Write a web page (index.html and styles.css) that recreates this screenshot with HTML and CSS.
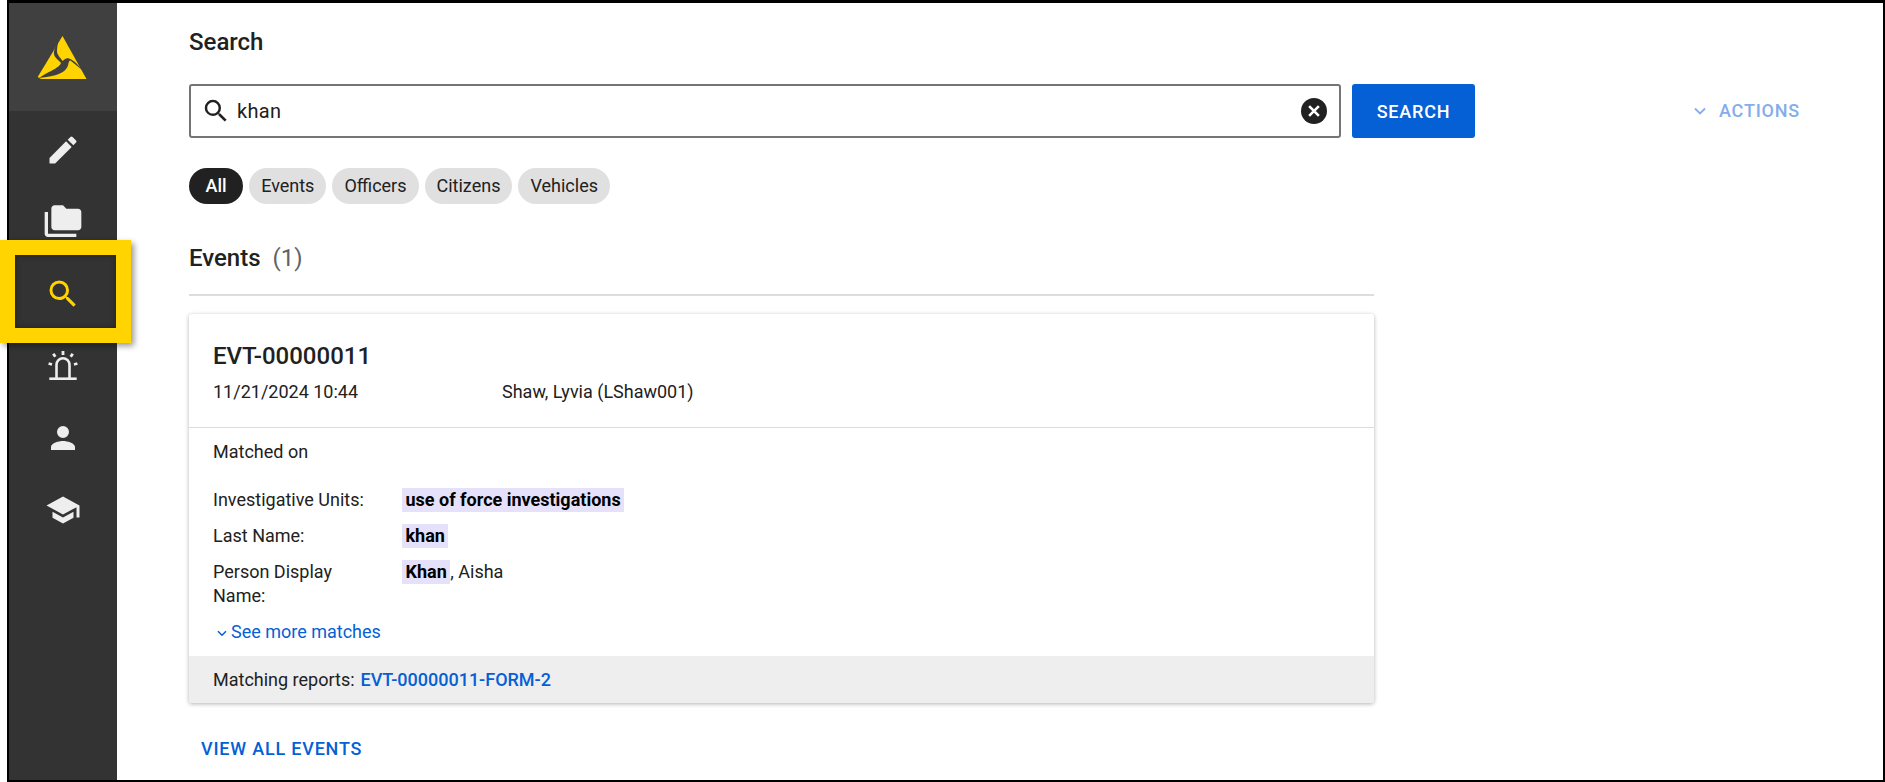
FILE: index.html
```html
<!DOCTYPE html>
<html lang="en">
<head>
<meta charset="utf-8">
<title>Search</title>
<link rel="stylesheet" href="styles.css">
</head>
<body>
<div class="frame">
  <aside class="rail">
    <div class="brand">
      <svg class="logo" viewBox="0 0 60 54" aria-hidden="true">
        <path fill="#ffd400" d="M29.500 5 L53.500 48 L8 48 L4.700 46 Z"/>
        <path fill="#404040" d="M25.700 9 C23 15 20.500 19 21 23 C21.500 27 26 29 28 32 C27 35 22 38 16 41 C12 43 9 45 6 47 C14 46 22 45 28 42 C33 39.500 35 36 35.500 32 C36 30 37 29 38 30 C42 33 47 37 51 41 C46 35 41 29 36 27.500 C33 26.500 31 29 29.500 30 C27 26 24 24 24 20 C24 16 25 12 25.700 9 Z"/>
      </svg>
    </div>
    <nav class="nav">
      <a class="nav-item">
        <svg class="nav-icon" viewBox="0 0 24 24"><path d="M3 17.250V21h3.750L17.810 9.940l-3.750-3.750L3 17.250zM20.710 7.040a1 1 0 0 0 0-1.410l-2.340-2.340a1 1 0 0 0-1.410 0l-1.830 1.830 3.750 3.750 1.830-1.830z"/></svg>
      </a>
      <a class="nav-item">
        <svg class="nav-icon nav-icon-lg" viewBox="0 0 24 24"><path d="M3 6H1v13c0 1.100.9 2 2 2h17v-2H3V6z"/><path d="M21 4h-7l-2-2H7c-1.100 0-1.990.9-1.990 2L5 15c0 1.100.9 2 2 2h14c1.100 0 2-.9 2-2V6c0-1.100-.9-2-2-2z"/></svg>
      </a>
      <a class="nav-item">
        <svg class="nav-icon nav-icon-active" viewBox="0 0 24 24"><path d="M15.500 14h-.79l-.28-.27A6.470 6.470 0 0 0 16 9.500 6.500 6.500 0 1 0 9.500 16c1.610 0 3.090-.59 4.230-1.570l.27.28v.79l5 4.990L20.490 19l-4.990-5zm-6 0C7.010 14 5 11.990 5 9.500S7.010 5 9.500 5 14 7.010 14 9.500 11.990 14 9.500 14z"/></svg>
      </a>
      <a class="nav-item">
        <svg class="nav-icon nav-icon-siren" viewBox="0 0 32 30"><g fill="none" stroke="#eee" stroke-width="2.600"><path d="M2.300 27.700h27.400"/><path d="M9.500 27V13.800a6.500 6.500 0 0 1 13 0V27"/></g><g fill="none" stroke="#eee" stroke-width="2.800"><path d="M16 0v4"/><path d="M6.300 2.800l2 3"/><path d="M25.700 2.800l-2 3"/><path d="M1.600 12.500l3.400 1"/><path d="M30.400 12.500l-3.400 1"/></g></svg>
      </a>
      <a class="nav-item">
        <svg class="nav-icon" viewBox="0 0 24 24"><path d="M12 12a4 4 0 1 0 0-8 4 4 0 0 0 0 8zm0 2c-2.670 0-8 1.340-8 4v2h16v-2c0-2.660-5.330-4-8-4z"/></svg>
      </a>
      <a class="nav-item">
        <svg class="nav-icon" viewBox="0 0 24 24"><path d="M5 13.180v4L12 21l7-3.820v-4L12 17l-7-3.820zM12 3 1 9l11 6 9-4.910V17h2V9L12 3z"/></svg>
      </a>
    </nav>
  </aside>

  <main class="content">
    <h1 class="page-title">Search</h1>

    <div class="search-row">
      <div class="search-box">
        <svg class="search-icon" viewBox="0 0 24 24"><path d="M15.500 14h-.79l-.28-.27A6.470 6.470 0 0 0 16 9.500 6.500 6.500 0 1 0 9.500 16c1.610 0 3.090-.59 4.230-1.570l.27.28v.79l5 4.990L20.490 19l-4.990-5zm-6 0C7.010 14 5 11.990 5 9.500S7.010 5 9.500 5 14 7.010 14 9.500 11.990 14 9.500 14z"/></svg>
        <span class="search-value">khan</span>
        <svg class="clear-icon" viewBox="0 0 24 24"><circle cx="12" cy="12" r="12" fill="#212121"/><path d="M7.500 7.500l9 9M16.500 7.500l-9 9" stroke="#fff" stroke-width="2.400" fill="none"/></svg>
      </div>
      <button class="search-btn">SEARCH</button>
      <div class="actions">
        <svg class="actions-chevron" viewBox="0 0 12 8"><path d="M1 1.500l5 5 5-5" fill="none" stroke="currentColor" stroke-width="1.800"/></svg>
        <span>ACTIONS</span>
      </div>
    </div>

    <div class="chips">
      <span class="chip chip-on">All</span>
      <span class="chip">Events</span>
      <span class="chip">Officers</span>
      <span class="chip">Citizens</span>
      <span class="chip">Vehicles</span>
    </div>

    <section class="results">
      <h2 class="section-title">Events <span class="count">(1)</span></h2>
      <article class="card">
        <header class="card-head">
          <h3 class="card-id">EVT-00000011</h3>
          <div class="card-meta">
            <span class="meta-date">11/21/2024 10:44</span>
            <span>Shaw, Lyvia (LShaw001)</span>
          </div>
        </header>
        <div class="card-body">
          <div class="matched">Matched on</div>
          <dl class="matches">
            <dt>Investigative Units:</dt>
            <dd><mark>use of force investigations</mark></dd>
            <dt>Last Name:</dt>
            <dd><mark>khan</mark></dd>
            <dt>Person Display Name:</dt>
            <dd><mark>Khan</mark>, Aisha</dd>
          </dl>
          <a class="more">
            <svg class="more-chevron" viewBox="0 0 10 7"><path d="M1 1.200l4 4 4-4" fill="none" stroke="currentColor" stroke-width="1.500"/></svg>See more matches
          </a>
        </div>
        <footer class="card-foot">
          <span>Matching reports:</span>
          <a class="report-link">EVT-00000011-FORM-2</a>
        </footer>
      </article>
      <a class="view-all">VIEW ALL EVENTS</a>
    </section>
  </main>
</div>
<div class="spotlight" aria-hidden="true"></div>
</body>
</html>
```
FILE: styles.css
```css
* {
  box-sizing: border-box;
}

html,
body {
  margin: 0;
  height: 100%;
  overflow: hidden;
  background: #fff;
}

body {
  padding-left: 7px;
  font-family: Roboto, "Liberation Sans", sans-serif;
  font-size: 18px;
  line-height: 24px;
  color: #212121;
}

.frame {
  display: flex;
  height: 782px;
  border: 2px solid #000;
  border-top-width: 3px;
}

.rail {
  flex: 0 0 108px;
  background: #333;
}

.brand {
  display: flex;
  height: 108px;
  align-items: center;
  justify-content: center;
  background: #404040;
}

.logo {
  width: 60px;
  height: 54px;
  margin-top: 2px;
}

.nav {
  display: flex;
  flex-direction: column;
  padding-top: 3px;
}

.nav-item {
  display: flex;
  height: 72px;
  align-items: center;
  justify-content: center;
}

.nav-icon {
  width: 36px;
  height: 36px;
  fill: #eee;
}

.nav-icon-lg {
  width: 40px;
  height: 40px;
}

.nav-icon-active {
  fill: #ffd400;
}

.nav-icon-siren {
  width: 32px;
  height: 30px;
}

.content {
  flex: 1;
  padding: 0 0 0 72px;
}

.page-title {
  margin: 0;
  padding-top: 25px;
  font-size: 24px;
  font-weight: 500;
  line-height: 28px;
}

.search-row {
  display: flex;
  align-items: center;
  height: 54px;
  margin-top: 28px;
}

.search-box {
  display: flex;
  align-items: center;
  width: 1152px;
  height: 54px;
  padding: 0 12px 0 10px;
  border: 2px solid #757575;
  border-radius: 3px;
}

.search-icon {
  flex: none;
  width: 30px;
  height: 30px;
  fill: #212121;
}

.search-value {
  flex: 1;
  margin-left: 6px;
  font-size: 20px;
  letter-spacing: 0.3px;
}

.clear-icon {
  flex: none;
  width: 26px;
  height: 26px;
}

.search-btn {
  width: 123px;
  height: 54px;
  margin-left: 11px;
  border: 0;
  border-radius: 3px;
  background: #055fd5;
  color: #fff;
  font-family: inherit;
  font-size: 18px;
  font-weight: 500;
  letter-spacing: 0.8px;
}

.actions {
  display: flex;
  align-items: center;
  margin-left: 219px;
  color: #85adea;
  font-size: 18px;
  font-weight: 500;
  letter-spacing: 0.8px;
}

.actions-chevron {
  width: 12px;
  height: 8px;
  margin-right: 13px;
}

.chips {
  display: flex;
  gap: 6px;
  margin-top: 30px;
}

.chip {
  height: 36px;
  padding: 0 12px;
  border-radius: 18px;
  background: #e0e0e0;
  line-height: 36px;
}

.chip-on {
  background: #212121;
  color: #fff;
  font-weight: 500;
  padding: 0 16.500px;
}

.results {
  width: 1185px;
  margin-top: 34px;
}

.section-title {
  margin: 0;
  height: 56px;
  border-bottom: 2px solid #ddd;
  font-size: 24px;
  font-weight: 500;
  line-height: 40px;
  box-sizing: content-box;
}

.count {
  margin-left: 6px;
  font-weight: 400;
  color: #5f6368;
}

.card {
  margin-top: 18px;
  border-radius: 3px;
  background: #fff;
  box-shadow: 0 1px 4px rgba(0, 0, 0, .3);
  overflow: hidden;
}

.card-head {
  height: 114px;
  padding: 28px 24px 0;
  border-bottom: 1px solid #ddd;
}

.card-id {
  margin: 0;
  font-size: 24px;
  font-weight: 500;
  line-height: 28px;
}

.card-meta {
  display: flex;
  margin-top: 10px;
}

.meta-date {
  width: 289px;
}

.card-body {
  height: 228px;
  padding: 12px 24px 0;
}

.matches {
  display: grid;
  grid-template-columns: 189px 1fr;
  column-gap: 0;
  row-gap: 12px;
  margin: 24px 0 0;
}

.matches dt {
  width: 160px;
}

.matches dd {
  margin: 0;
}

mark {
  display: inline-block;
  padding: 0 3.500px;
  background: #e6e1fb;
  color: #000;
  font-weight: 700;
}

.more {
  display: flex;
  align-items: center;
  margin: 12px 0 0 4px;
  color: #055fd5;
}

.more-chevron {
  width: 10px;
  height: 7px;
  margin: 2px 4px 0 0;
}

.card-foot {
  display: flex;
  gap: 6px;
  height: 47px;
  align-items: center;
  padding: 0 24px;
  background: #eee;
}

.report-link {
  color: #055fd5;
  font-weight: 500;
}

.view-all {
  display: block;
  margin: 34px 0 0 12px;
  color: #055fd5;
  font-size: 18px;
  font-weight: 500;
  letter-spacing: 0.8px;
}

.spotlight {
  position: absolute;
  left: 0;
  top: 240px;
  width: 131px;
  height: 103px;
  border: 15px solid #ffd400;
  box-shadow: 3px 3px 6px rgba(0, 0, 0, .4), inset 0 0 6px rgba(0, 0, 0, .35);
}
```
